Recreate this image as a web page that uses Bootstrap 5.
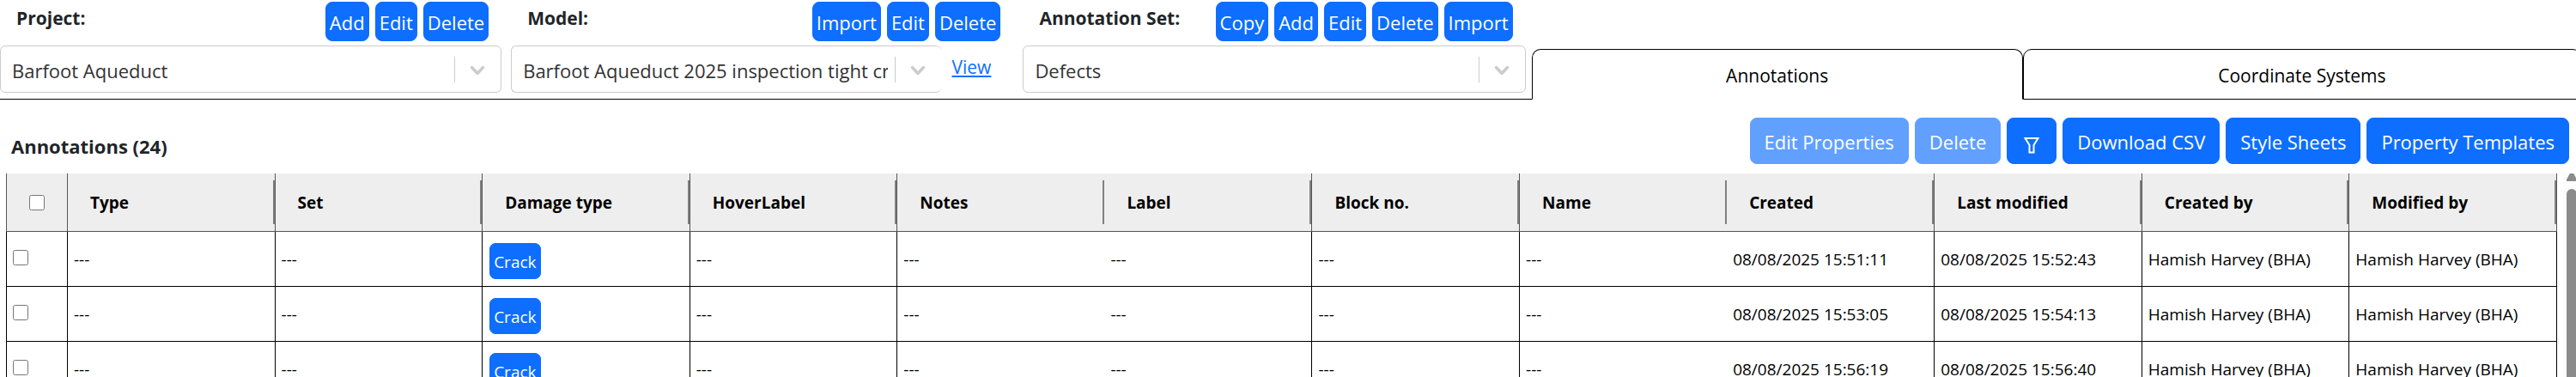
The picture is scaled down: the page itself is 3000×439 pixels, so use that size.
<!DOCTYPE html>
<html lang="en">
<head>
<meta charset="utf-8">
<meta name="viewport" content="width=device-width, initial-scale=1">
<title>Annotations</title>
<link href="https://cdn.jsdelivr.net/npm/bootstrap@5.3.0/dist/css/bootstrap.min.css" rel="stylesheet">
<style>
  body { font-family: "Open Sans", "Noto Sans", sans-serif; font-size: 21px; line-height: 30px; color: #212529; }
  .app-shell { height: 100vh; overflow: hidden; }

  /* Top bar: three pickers, then the two tabs */
  .top-bar { display: grid; grid-template-columns: 595fr 596fr 592fr 572fr 650fr; margin-right: -6px; }
  .picker { display: flex; flex-direction: column; border-bottom: 1px solid #000; padding: 2px 11px 7px 0; }
  .picker-set { padding-right: 7px; }
  .picker-head { display: flex; justify-content: space-between; align-items: flex-start; padding: 0 15px 0 19px; height: 51px; }
  .picker-head label { font-weight: 700; padding-top: 4px; }
  .picker-btns, .tool-btns { display: flex; gap: 7px; }
  .btn-primary { --bs-btn-bg: #0d6eff; --bs-btn-border-color: #0d6eff; --bs-btn-disabled-bg: #0d6eff; --bs-btn-disabled-border-color: #0d6eff; }
  .btn-mini { --bs-btn-font-size: 22px; --bs-btn-line-height: 30px; --bs-btn-border-radius: 8px; padding: 8px 4px 6px; }
  .picker-select {
    height: 55px; border: 1px solid #ccc; border-radius: 6px; color: #333; font-size: 22px; line-height: 30px;
    padding: 13px 62px 10px 13px; background-size: 54px 30px; background-position: right 0 center;
    background-image: url("data:image/svg+xml,%3csvg xmlns='http://www.w3.org/2000/svg' viewBox='0 0 54 30'%3e%3cpath d='M.5 0v30' stroke='%23ccc'/%3e%3cpath d='M20.500 12.500l6.500 7 6.500-7' fill='none' stroke='%23ccc' stroke-width='3.500' stroke-linecap='round' stroke-linejoin='round'/%3e%3c/svg%3e");
  }
  .picker-link { padding: 0 26px 0 13px; color: #0d6eff; line-height: 50px; }
  .tab-btn { margin-top: 57px; height: 59px; border: 1px solid #000; border-radius: 10px 10px 0 0; background: #fff; color: #000; padding: 2px 0 0; }
  .tab-btn.active { border-bottom-color: transparent; }

  /* Toolbar above the table */
  .tool-row { padding: 21px 8px 11px 13px; }
  .tool-row h1 { font-size: 22px; line-height: 30px; font-weight: 700; margin: 18px 0 0; }
  .btn-tool { --bs-btn-font-size: 22px; --bs-btn-line-height: 30px; --bs-btn-border-radius: 8px; padding: 12px 16px 10px; }

  /* Annotation table */
  .grid-pane { flex: 1 1 0; min-height: 0; overflow: hidden; padding-left: 7px; }
  .ann-table { table-layout: fixed; width: 100%; border-collapse: collapse; font-size: 19px; line-height: 26px; color: #000; align-self: flex-start; }
  .ann-table th, .ann-table td { border: 1px solid #000; }
  .ann-table th { background: #eee; padding: 8px 0 7px; border-color: #555; border-top: 0; height: 67px; }
  .ann-table td { height: 64px; padding: 2px 7px 0; }
  .ann-table td:first-child { padding-top: 0; padding-bottom: 3px; }
  .ann-table .tag-cell { padding: 5px 8px 0; }
  .ann-table .open-left { border-left: 0; }
  .ann-table .open-right { border-right: 0; }
  .col-check { width: 71px; }
  .th-label { display: flex; align-items: center; height: 51px; padding-left: 26px; border-right: 2px solid #808080; }
  .ann-table input { width: 18px; height: 18px; margin: 0; display: block; }
  .ann-table th input { margin: 0 auto; }
  .btn-tag { --bs-btn-font-size: 19px; --bs-btn-line-height: 26px; --bs-btn-border-radius: 7px; display: block; padding: 8px 4px 6px; }
  .scroll-rail { flex: 0 0 15px; margin-left: 7px; background: #fcfcfc; padding-left: 4px; overflow: hidden; }
  .scroll-rail svg { display: block; margin: -3px 0 9px; }
  .scroll-thumb { height: 400px; width: 12px; border-radius: 6px; background: #8b8b8b; }
</style>
</head>
<body>
<div class="app-shell d-flex flex-column">
  <header class="top-bar">
    <section class="picker">
      <div class="picker-head">
        <label for="project">Project:</label>
        <div class="picker-btns">
          <button type="button" class="btn btn-primary btn-mini">Add</button>
          <button type="button" class="btn btn-primary btn-mini">Edit</button>
          <button type="button" class="btn btn-primary btn-mini">Delete</button>
        </div>
      </div>
      <select id="project" class="form-select picker-select"><option>Barfoot Aqueduct</option></select>
    </section>
    <section class="picker">
      <div class="picker-head">
        <label for="model">Model:</label>
        <div class="picker-btns">
          <button type="button" class="btn btn-primary btn-mini">Import</button>
          <button type="button" class="btn btn-primary btn-mini">Edit</button>
          <button type="button" class="btn btn-primary btn-mini">Delete</button>
        </div>
      </div>
      <div class="d-flex">
        <select id="model" class="form-select picker-select border-end-0"><option>Barfoot Aqueduct 2025 inspection tight crop</option></select>
        <a href="#" class="picker-link">View</a>
      </div>
    </section>
    <section class="picker picker-set">
      <div class="picker-head">
        <label for="annset">Annotation Set:</label>
        <div class="picker-btns">
          <button type="button" class="btn btn-primary btn-mini">Copy</button>
          <button type="button" class="btn btn-primary btn-mini">Add</button>
          <button type="button" class="btn btn-primary btn-mini">Edit</button>
          <button type="button" class="btn btn-primary btn-mini">Delete</button>
          <button type="button" class="btn btn-primary btn-mini">Import</button>
        </div>
      </div>
      <select id="annset" class="form-select picker-select"><option>Defects</option></select>
    </section>
    <button type="button" class="tab-btn active">Annotations</button>
    <button type="button" class="tab-btn">Coordinate Systems</button>
  </header>

  <div class="tool-row d-flex justify-content-between">
    <h1>Annotations (24)</h1>
    <div class="tool-btns">
      <button type="button" class="btn btn-primary btn-tool" disabled>Edit Properties</button>
      <button type="button" class="btn btn-primary btn-tool" disabled>Delete</button>
      <button type="button" class="btn btn-primary btn-tool" aria-label="Filter">
        <svg class="d-block" width="24" height="30" viewBox="0 0 24 30" fill="none" stroke="#fff" stroke-width="2"><path d="M4.500 11h15l-5 8v8.500h-5v-8.500z"/></svg>
      </button>
      <button type="button" class="btn btn-primary btn-tool">Download CSV</button>
      <button type="button" class="btn btn-primary btn-tool">Style Sheets</button>
      <button type="button" class="btn btn-primary btn-tool">Property Templates</button>
    </div>
  </div>

  <div class="grid-pane d-flex">
    <table class="ann-table">
      <thead>
        <tr>
          <th class="col-check"><input type="checkbox" aria-label="Select all"></th>
          <th><div class="th-label">Type</div></th>
          <th><div class="th-label">Set</div></th>
          <th><div class="th-label">Damage type</div></th>
          <th><div class="th-label">HoverLabel</div></th>
          <th class="open-right"><div class="th-label">Notes</div></th>
          <th class="open-left"><div class="th-label">Label</div></th>
          <th><div class="th-label">Block no.</div></th>
          <th class="open-right"><div class="th-label">Name</div></th>
          <th class="open-left"><div class="th-label">Created</div></th>
          <th><div class="th-label">Last modified</div></th>
          <th><div class="th-label">Created by</div></th>
          <th><div class="th-label">Modified by</div></th>
        </tr>
      </thead>
      <tbody>
        <tr>
          <td><input type="checkbox" aria-label="Select row 1"></td>
          <td>---</td><td>---</td><td class="tag-cell"><button type="button" class="btn btn-primary btn-tag">Crack</button></td><td>---</td><td class="open-right">---</td><td class="open-left">---</td><td>---</td><td class="open-right">---</td>
          <td class="open-left">08/08/2025 15:51:11</td><td>08/08/2025 15:52:43</td><td>Hamish Harvey (BHA)</td><td>Hamish Harvey (BHA)</td>
        </tr>
        <tr>
          <td><input type="checkbox" aria-label="Select row 2"></td>
          <td>---</td><td>---</td><td class="tag-cell"><button type="button" class="btn btn-primary btn-tag">Crack</button></td><td>---</td><td class="open-right">---</td><td class="open-left">---</td><td>---</td><td class="open-right">---</td>
          <td class="open-left">08/08/2025 15:53:05</td><td>08/08/2025 15:54:13</td><td>Hamish Harvey (BHA)</td><td>Hamish Harvey (BHA)</td>
        </tr>
        <tr>
          <td><input type="checkbox" aria-label="Select row 3"></td>
          <td>---</td><td>---</td><td class="tag-cell"><button type="button" class="btn btn-primary btn-tag">Crack</button></td><td>---</td><td class="open-right">---</td><td class="open-left">---</td><td>---</td><td class="open-right">---</td>
          <td class="open-left">08/08/2025 15:56:19</td><td>08/08/2025 15:56:40</td><td>Hamish Harvey (BHA)</td><td>Hamish Harvey (BHA)</td>
        </tr>
      </tbody>
    </table>
    <div class="scroll-rail" aria-hidden="true">
      <svg width="12" height="12" viewBox="0 0 12 12"><path d="M0 12v-2L5 1q1-1 2 0l5 9v2z" fill="#8b8b8b"/></svg>
      <div class="scroll-thumb"></div>
    </div>
  </div>
</div>
<script src="https://cdn.jsdelivr.net/npm/bootstrap@5.3.0/dist/js/bootstrap.bundle.min.js"></script>
</body>
</html>
